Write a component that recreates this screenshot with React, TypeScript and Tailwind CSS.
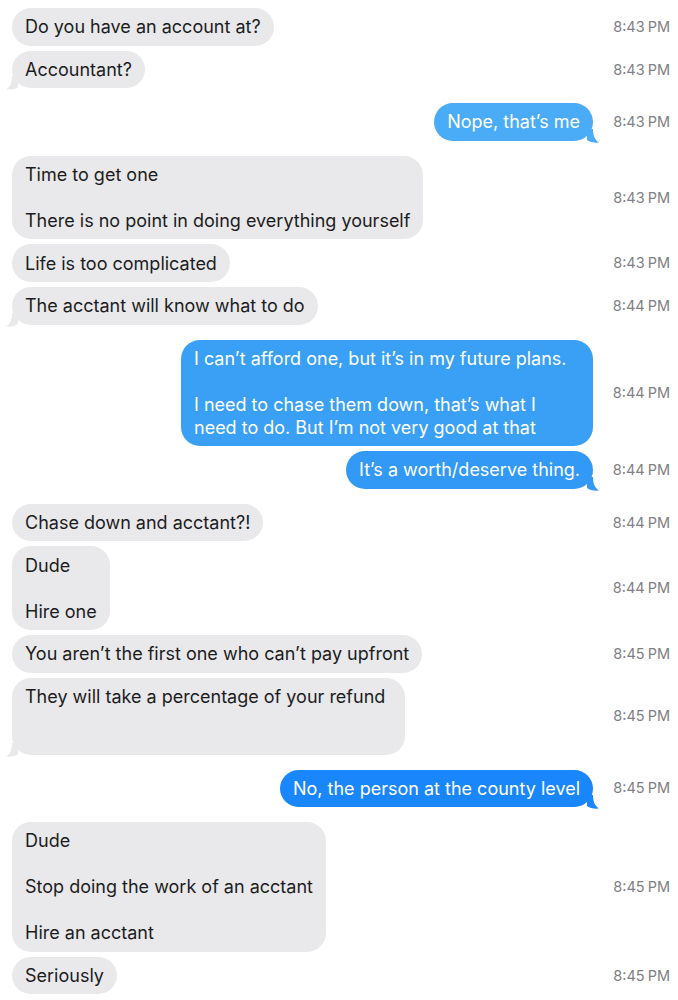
import React from 'react'

type Msg = {
  text: string
  time: string
  me?: boolean
  tail?: boolean
  color?: string
  size?: string
}

const messages: Msg[] = [
  { text: 'Do you have an account at?', time: '8:43' },
  { text: 'Accountant?', time: '8:43', tail: true },
  { text: 'Nope, that’s me', time: '8:43', me: true, tail: true, color: '#4aabf6' },
  { text: 'Time to get one\n\nThere is no point in doing everything yourself', time: '8:43' },
  { text: 'Life is too complicated', time: '8:43' },
  { text: 'The acctant will know what to do', time: '8:44', tail: true },
  {
    text: 'I can’t afford one, but it’s in my future plans.\n\nI need to chase them down, that’s what I\nneed to do. But I’m not very good at that',
    time: '8:44',
    me: true,
    color: '#3aa0f6',
    size: 'w-[412px]',
  },
  { text: 'It’s a worth/deserve thing.', time: '8:44', me: true, tail: true, color: '#3399f6' },
  { text: 'Chase down and acctant?!', time: '8:44' },
  { text: 'Dude\n\nHire one', time: '8:44' },
  { text: 'You aren’t the first one who can’t pay upfront', time: '8:45' },
  {
    text: 'They will take a percentage of your refund',
    time: '8:45',
    tail: true,
    size: 'w-[393px] h-[77px]',
  },
  { text: 'No, the person at the county level', time: '8:45', me: true, tail: true, color: '#1a86fb' },
  { text: 'Dude\n\nStop doing the work of an acctant\n\nHire an acctant', time: '8:45' },
  { text: 'Seriously', time: '8:45' },
]

const Tail: React.FC<{ me?: boolean; color: string }> = ({ me, color }) => (
  <svg
    width="12"
    height="14"
    viewBox="0 0 12 14"
    className={
      me
        ? 'absolute right-[-6px] bottom-[-2px]'
        : 'absolute left-[-6px] bottom-[-2px] -scale-x-100'
    }
  >
    <path d="M0 0 H6 C6 7 8 11 12 13.6 C7 14.2 3 13 0 11 Z" fill={color} />
  </svg>
)

const Row: React.FC<{ m: Msg; prev?: Msg }> = ({ m, prev }) => {
  const same = prev && !!prev.me === !!m.me
  const bg = m.me ? m.color ?? '#1a86fb' : '#e9e9eb'
  return (
    <div className={`flex items-center ${prev ? (same ? 'mt-[5px]' : 'mt-[15px]') : ''}`}>
      <div className={`flex-1 flex ${m.me ? 'justify-end' : 'justify-start pl-3'}`}>
        <div
          className={`relative rounded-[19px] px-[13px] py-[7.3px] text-[18px] leading-[23px] whitespace-pre-line ${
            m.me ? 'text-white' : 'text-[#1c1c1e]'
          } ${m.size ?? ''}`}
          style={{ backgroundColor: bg }}
        >
          {m.text}
          {m.tail && <Tail me={m.me} color={bg} />}
        </div>
      </div>
      <div className="w-[85px] shrink-0 pr-2 text-right text-[14.5px] text-[#7f7f84]">
        {m.time}
        <span className="ml-[3px]">PM</span>
      </div>
    </div>
  )
}

export default function App() {
  return (
    <div
      className="w-[678px] h-[1000px] overflow-hidden bg-white pt-2"
      style={{ fontFamily: 'Inter, "Noto Sans", sans-serif' }}
    >
      {messages.map((m, i) => (
        <Row key={i} m={m} prev={messages[i - 1]} />
      ))}
    </div>
  )
}
